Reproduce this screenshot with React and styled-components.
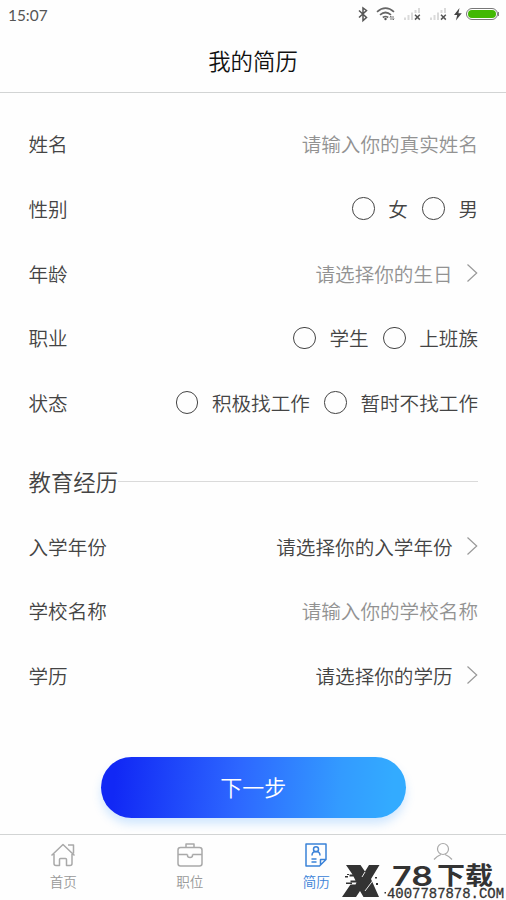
import React from "react";
import styled, { createGlobalStyle } from "styled-components";

const GlobalStyle = createGlobalStyle`
  * { box-sizing: border-box; }
  body {
    margin: 0;
    background: #fefefe;
    font-family: "Noto Sans CJK SC", sans-serif;
    font-weight: 350;
  }
`;

const Screen = styled.div`
  position: relative;
  display: flex;
  flex-direction: column;
  width: 506px;
  height: 900px;
  overflow: hidden;
  background: #fefefe;
`;

const StatusBar = styled.div`
  display: flex;
  align-items: center;
  justify-content: space-between;
  height: 30px;
  padding: 0 7px 0 8px;
  color: #555;
  font: 400 15.4px/30px Lato, sans-serif;
`;

const StatusIcons = styled.svg`
  display: block;
  width: 143px;
  height: 28px;
  margin-bottom: 2px;
`;

const Header = styled.header`
  display: flex;
  align-items: center;
  justify-content: center;
  height: 63px;
  padding-bottom: 3px;
  border-bottom: 1px solid #d2d4d4;
  color: #111;
  font-size: 22.4px;
`;

const Form = styled.main`
  flex: 1;
  display: flex;
  flex-direction: column;
  padding: 19px 28px 0 28.5px;
`;

const Row = styled.div`
  display: flex;
  align-items: center;
  justify-content: space-between;
  height: 64.65px;
  color: #444;
  font-size: 19.6px;
  line-height: 28px;
  white-space: nowrap;
`;

const Value = styled.div`
  display: flex;
  align-items: center;
  color: ${(p) => (p.$muted ? "#929292" : "#444")};
`;

const Option = styled.label`
  display: flex;
  align-items: center;
  margin-left: 14.6px;
`;

const Circle = styled.span`
  width: 22.4px;
  height: 22.4px;
  margin: -1px 13.6px 0 0;
  border: 1px solid #444;
  border-radius: 50%;
`;

const ChevronIcon = styled.svg`
  width: 12px;
  height: 20px;
  margin: -1px 0 0 13.4px;
`;

const SectionTitle = styled.div`
  display: flex;
  align-items: center;
  height: 79px;
  padding-top: 13px;
  color: #444;
  font-size: 22.4px;
  white-space: nowrap;
`;

const Rule = styled.span`
  flex: 1;
  height: 1px;
  margin-top: 1px;
  background: #dadada;
`;

const NextButton = styled.button`
  align-self: center;
  width: 305px;
  height: 61px;
  margin-top: 49px;
  padding: 0 0 3px;
  border: 0;
  border-radius: 31px;
  background: linear-gradient(95deg, #1128f5 5%, #2d67ff 45%, #339bff 78%, #33abff 95%);
  box-shadow: 0 6px 10px rgba(51, 150, 255, 0.22);
  color: #fff;
  font: 350 22px "Noto Sans CJK SC", sans-serif;
`;

const TabBar = styled.nav`
  display: grid;
  grid-template-columns: repeat(4, 1fr);
  height: 66px;
  border-top: 1px solid #d2d4d4;
`;

const Tab = styled.div`
  display: flex;
  flex-direction: column;
  align-items: center;
  padding-top: 7px;
  color: ${(p) => (p.$active ? "#3a82d8" : "#999")};
  font-size: 13.6px;
  line-height: 20px;
`;

const TabIcon = styled.svg`
  width: 26px;
  height: 26px;
  margin-bottom: 3px;
  fill: none;
  stroke: ${(p) => (p.$active ? "#3a82d8" : "#a9a9a9")};
  stroke-width: 1.5;
  stroke-linejoin: round;
`;

const Watermark = styled.svg`
  position: absolute;
  left: 341px;
  top: 856px;
  width: 165px;
  height: 44px;
  fill: #333;
`;

const Chevron = () => (
  <ChevronIcon viewBox="0 0 12 20">
    <path d="M1.5 1.5 10.7 10 1.5 18.5" fill="none" stroke="#999" strokeWidth="1.2" />
  </ChevronIcon>
);

const Signal = ({ x }) => (
  <g transform={`translate(${x} 0)`}>
    <path d="M0 20v-2.500h2V20zM3.500 20v-5h2v5zM7 20v-7.500h2V20zM10.500 13v-3h2v3zM14 13V8h2v5z" fill="#dadada" />
    <path d="m11 14.800 4.800 4.800m0-4.800L11 19.600" stroke="#555" strokeWidth="1.500" />
  </g>
);

const rows = [
  { label: "姓名", text: "请输入你的真实姓名", muted: true },
  { label: "性别", options: ["女", "男"] },
  { label: "年龄", text: "请选择你的生日", muted: true, picker: true },
  { label: "职业", options: ["学生", "上班族"] },
  { label: "状态", options: ["积极找工作", "暂时不找工作"] },
];

const education = [
  { label: "入学年份", text: "请选择你的入学年份", picker: true },
  { label: "学校名称", text: "请输入你的学校名称", muted: true },
  { label: "学历", text: "请选择你的学历", picker: true },
];

const Field = ({ label, text, muted, picker, options }) => (
  <Row>
    <span>{label}</span>
    <Value $muted={muted}>
      {options
        ? options.map((o) => (
            <Option key={o}>
              <Circle />
              {o}
            </Option>
          ))
        : text}
      {picker && <Chevron />}
    </Value>
  </Row>
);

export default function App() {
  return (
    <Screen>
      <GlobalStyle />
      <StatusBar>
        <span>15:07</span>
        <StatusIcons viewBox="356 0 143 28">
          <path d="m359 10.5 7.500 7-3.500 3V8l3.500 2.500-7.500 7" fill="none" stroke="#555" strokeWidth="1.500" />
          <g fill="none" stroke="#666" strokeWidth="1.700">
            <path d="M377 11.8q8.5-7.2 17 0M380 14.8q5.5-4.6 11 0M382.8 17.5q2.7-2 5.4 0" />
          </g>
          <circle cx="385.5" cy="19" r="1.2" fill="#555" />
          <path d="M391 20v-4m-1.200 1.300 1.200-1.300M393 16v4m1.200-1.300-1.200 1.300" fill="none" stroke="#666" strokeWidth=".9" />
          <Signal x={404} />
          <Signal x={430} />
          <path d="m459.5 8-5.5 7h3.200l-1.300 5.500 5.900-7.300h-3.400z" fill="#444" />
          <rect x="466.5" y="8.500" width="31" height="11" rx="5.500" fill="#fff" stroke="#777" />
          <rect x="468" y="10" width="28" height="8" rx="4" fill="#42b803" />
          <path d="M498.600 12v4" stroke="#777" />
        </StatusIcons>
      </StatusBar>
      <Header>我的简历</Header>
      <Form>
        {rows.map((r) => (
          <Field key={r.label} {...r} />
        ))}
        <SectionTitle>
          教育经历
          <Rule />
        </SectionTitle>
        {education.map((r) => (
          <Field key={r.label} {...r} />
        ))}
        <NextButton>下一步</NextButton>
      </Form>
      <TabBar>
        <Tab>
          <TabIcon viewBox="0 0 26 26">
            <path d="M1.500 13.500 13 2.500l11.500 11M18 3h5.500v8.500M4 12v9.500q0 2 2 2h3.500v-6q0-1 1-1h5q1 0 1 1v6H20q2 0 2-2V12" />
          </TabIcon>
          首页
        </Tab>
        <Tab>
          <TabIcon viewBox="0 0 26 26">
            <rect x="1" y="5.500" width="24" height="18.500" rx="2.500" />
            <path d="M9 5.500V2h8v3.500M1 12.500h9.500M15.500 12.500H25M10.500 12.500v1q0 2 2.500 2t2.500-2v-1" />
          </TabIcon>
          职位
        </Tab>
        <Tab $active>
          <TabIcon $active viewBox="0 0 26 26">
            <path d="M23 17.500V2H3v22h13.500L23 17.500h-5.500v5.500M9 13.500c0-3 1.600-4 4-4s4 1 4 4M8.500 17h5M8.500 20h5" />
            <circle cx="13" cy="7.200" r="2.500" />
          </TabIcon>
          简历
        </Tab>
        <Tab>
          <TabIcon viewBox="0 0 26 26">
            <circle cx="13" cy="7" r="5.500" strokeWidth="1.200" />
            <path d="M4 17.500q3-3.500 7-5M22 17.500q-3-3.500-7-5" strokeWidth="1.200" />
          </TabIcon>
        </Tab>
      </TabBar>
      <Watermark viewBox="341 856 165 44">
        <path d="M346 865h14.500l4.500 6.500 4-6.500h10.500l-8.500 14 8 18h-15.500l-3.500-6-4 6h-14l8.500-12.500h5l1-2h-6v-2h5l-2-4h-4v-2h3z" />
        <path d="m365 872-3 5M365 891l9-12" fill="none" stroke="#fefefe" strokeWidth=".9" />
        <path d="M345 876h3v1.500h-3zM346 882.500h6v1.500h-6zM375 877h2v1.500h-2zM376 883h2v2h-2zM347 874h2v1h-2z" />
        <text x="392" y="885.500" fontFamily="Inter, sans-serif" fontWeight="600" fontSize="27" textLength="41" lengthAdjust="spacingAndGlyphs">78</text>
        <text x="437" y="883.500" fontFamily="Noto Sans CJK SC, sans-serif" fontWeight="700" fontSize="24" textLength="56" lengthAdjust="spacingAndGlyphs">下载</text>
        <rect x="384.500" y="892" width="1.500" height="1.500" />
        <text x="387" y="897.500" fontFamily="Liberation Mono, monospace" fontWeight="400" fontSize="14" textLength="117" lengthAdjust="spacingAndGlyphs" stroke="#333" strokeWidth=".3">4007787878.COM</text>
      </Watermark>
    </Screen>
  );
}
